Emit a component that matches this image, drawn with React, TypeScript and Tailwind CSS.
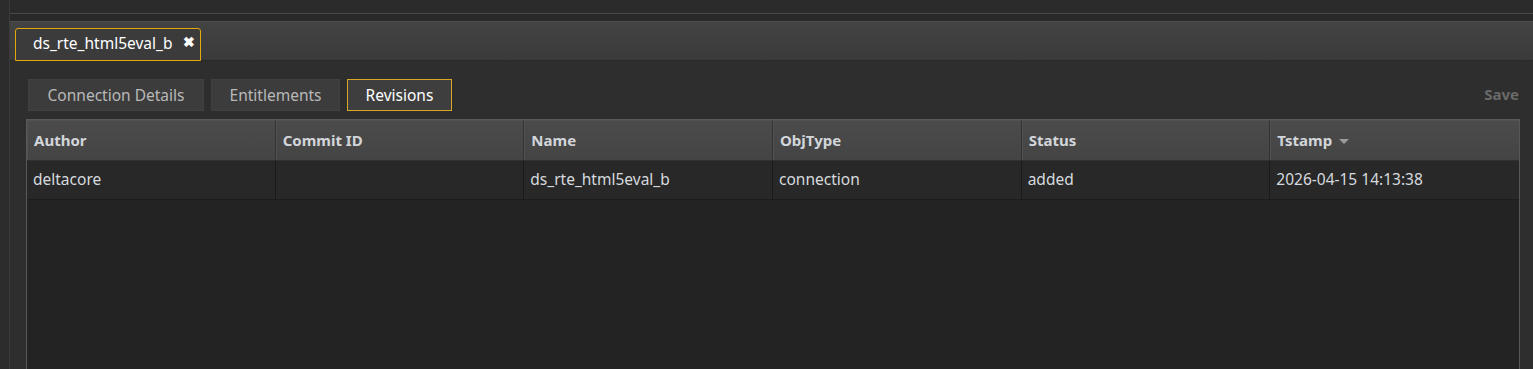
import { useState } from "react";

const COLS = ["Author", "Commit ID", "Name", "ObjType", "Status", "Tstamp"];
const ROWS = [["deltacore", "", "ds_rte_html5eval_b", "connection", "added", "2026-04-15 14:13:38"]];
const SUBTABS = [
  { label: "Connection Details", w: "w-[176px]" },
  { label: "Entitlements", w: "w-[129px]" },
  { label: "Revisions", w: "w-[105px]" },
];

export default function App() {
  const [active, setActive] = useState(2);

  return (
    <div className="h-[369px] w-full overflow-hidden bg-[#2c2c2c] flex font-['Noto_Sans',sans-serif] text-[15px]">
      <div className="w-[10px] shrink-0 border-r border-[#3b3b3b]" />
      <div className="flex-1 flex flex-col min-w-0">
        {/* top strip */}
        <div className="h-[14px] shrink-0 bg-[#2b2b2b] border-b border-[#484848]" />
        <div className="h-[7px] shrink-0 bg-[#292929]" />

        {/* doc tabs */}
        <div className="h-[40px] shrink-0 bg-gradient-to-b from-[#434343] to-[#3a3a3a] border-t border-[#4c4c4c] border-b border-b-[#2a2a2a] flex items-end pl-[5px]">
          <div className="h-[33px] -mb-[1px] w-[186px] flex items-center justify-between pl-[17px] pr-[5px] bg-[#3b3b3b] border border-[#e3aa0a] rounded-t-[3px]">
            <span className="text-white text-[15.5px] leading-none pb-[1px]">ds_rte_html5eval_b</span>
            <span className="text-white text-[14px] leading-none self-start mt-[6px] font-bold">✖</span>
          </div>
        </div>

        {/* body */}
        <div className="flex-1 bg-[#2e2e2e] pl-[16px] pr-[13px] flex flex-col min-h-0">
          <div className="h-[58px] shrink-0 flex items-end pb-[8px] gap-[7px] pl-[2px]">
            {SUBTABS.map((t, i) => (
              <button
                key={t.label}
                onClick={() => setActive(i)}
                className={`h-[32px] ${t.w} pt-[1px] border leading-none text-[15.5px] ${
                  active === i
                    ? "bg-[#3e3e3e] border-[#d8a723] text-white"
                    : "bg-[#3c3c3c] border-[#404040] text-[#b8b8b8]"
                }`}
              >
                {t.label}
              </button>
            ))}
            <div className="flex-1" />
            <span className="text-[#6a6a6a] font-bold mb-[6px] pr-[1px]">Save</span>
          </div>

          {/* grid */}
          <div className="flex-1 border border-[#585858] border-b-0 bg-[#232323] flex flex-col min-h-0">
            <div className="h-[41px] shrink-0 grid grid-cols-6 bg-[#3a3a3a] border-b border-[#303030]">
              {COLS.map((c) => (
                <div
                  key={c}
                  className="flex items-center px-[6px] font-bold text-[#d2d6da] bg-gradient-to-b from-[#4b4b4b] to-[#444444] border-r border-r-[#333] border-l border-l-[#525252] border-t border-t-[#525252] last:border-r-0"
                >
                  {c}
                  {c === "Tstamp" && (
                    <svg width="12" height="8" viewBox="0 0 12 8" className="ml-[6px] mt-[3px]">
                      <path d="M1 1 L11 1 L6 6 Z" fill="#9a9a9a" />
                    </svg>
                  )}
                </div>
              ))}
            </div>
            {ROWS.map((r, i) => (
              <div key={i} className="h-[39px] shrink-0 grid grid-cols-6 bg-[#282828] border-b border-[#1c1c1c]">
                {r.map((v, j) => (
                  <div key={j} className="flex items-center px-[6px] text-[#d6dade] text-[15.5px] border-r border-[#1a1a1a] last:border-r-0">
                    {v}
                  </div>
                ))}
              </div>
            ))}
          </div>
        </div>
      </div>
    </div>
  );
}
